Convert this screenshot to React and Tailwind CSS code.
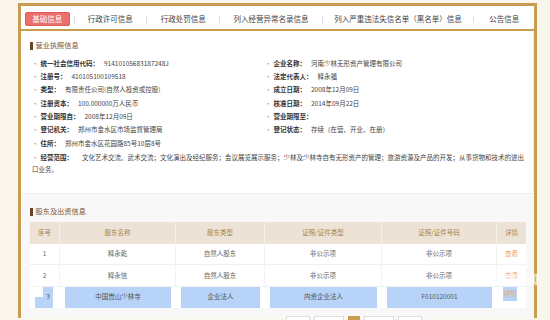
import React from 'react';

const tabs = [
  { label: '行政许可信息', w: 'w-[72px]' },
  { label: '行政处罚信息', w: 'w-[73px]' },
  { label: '列入经营异常名录信息', w: 'w-[102px]' },
  { label: '列入严重违法失信名单（黑名单）信息', w: 'w-[152px]' },
  { label: '公告信息', w: 'w-[60px]' },
];

const leftRows = [
  { label: '统一社会信用代码：', value: '91410105683187248J' },
  { label: '注册号：', value: '410105100109518' },
  { label: '类型：', value: '有限责任公司(自然人投资或控股)' },
  { label: '注册资本：', value: '100.000000万人民币' },
  { label: '营业期限自：', value: '2008年12月09日' },
  { label: '登记机关：', value: '郑州市金水区市场监督管理局' },
];

const rightRows = [
  { label: '企业名称：', value: '河南少林无形资产管理有限公司' },
  { label: '法定代表人：', value: '释永福' },
  { label: '成立日期：', value: '2008年12月09日' },
  { label: '核准日期：', value: '2014年09月22日' },
  { label: '营业期限至：', value: '' },
  { label: '登记状态：', value: '存续（在营、开业、在册）' },
];

const shareholders = [
  { no: '1', name: '释永乾', type: '自然人股东', certType: '非公示项', certNo: '非公示项' },
  { no: '2', name: '释永信', type: '自然人股东', certType: '非公示项', certNo: '非公示项' },
];

const cols = ['w-[30px]', 'w-[116px]', 'w-[89px]', 'w-[117px]', 'w-[115px]', 'w-[29px]'];

function Field({ label, value }) {
  return (
    <div className="flex h-[13.3px] items-center whitespace-nowrap leading-none">
      <span className="mr-[2px] text-[#999]">·</span>
      <span className="font-bold text-[#333]">{label}</span>
      <span className="ml-[5px] text-[#444]">{value}</span>
    </div>
  );
}

function SectionTitle({ children }) {
  return (
    <div className="flex h-[10px] items-center gap-[3px] text-[7.2px] leading-none text-[#7d5430]">
      <span className="h-[8px] w-[2.5px] bg-[#6b4423]" />
      {children}
    </div>
  );
}

export default function App() {
  return (
    <div className="relative h-[320px] w-[550px] overflow-hidden bg-[#faf6ee] pl-[18px] pt-[3px] font-['Noto_Sans_CJK_SC',sans-serif]">
      <div className="w-[519px] border-x-[3px] border-t-[3px] border-[#c99d51] bg-white">
        {/* tabs */}
        <div className="flex h-[25px] items-center border-b-2 border-[#c99d51] pl-[4px] pt-[3px] text-[7.5px] text-[#444]">
          <div className="flex h-[14px] w-[45px] items-center justify-center rounded-[2px] border border-[#e05a58] bg-[#ea6f6d] text-white">
            基础信息
          </div>
          <div className="ml-[4px] h-[7px] w-px bg-[#ddd]" />
          {tabs.map((t, i) => (
            <React.Fragment key={t.label}>
              <div className={`${t.w} text-center`}>{t.label}</div>
              {i < tabs.length - 1 && <div className="h-[7px] w-px bg-[#ddd]" />}
            </React.Fragment>
          ))}
        </div>

        {/* business licence */}
        <div className="h-[162px] border-r border-[#eee] px-[9px] pt-[10px] text-[6.5px]">
          <SectionTitle>营业执照信息</SectionTitle>
          <div className="mt-[5.5px] grid grid-cols-[233px_1fr] pl-[2px]">
            <div>
              {leftRows.map((r) => (
                <Field key={r.label} {...r} />
              ))}
            </div>
            <div>
              {rightRows.map((r) => (
                <Field key={r.label} {...r} />
              ))}
            </div>
          </div>
          <div className="pl-[2px]">
            <Field label="住所：" value="郑州市金水区花园路85号10层8号" />
            <p className="mt-[1px] leading-[12.5px] text-[#444]">
              <span className="mr-[2px] text-[#999]">·</span>
              <span className="font-bold text-[#333]">经营范围：</span>
              <span className="inline-block w-[9px]" />
              文化艺术交流、武术交流；文化演出及经纪服务；会议展览展示服务；少林及少林寺自有无形资产的管理；旅游资源及产品的开发；从事货物和技术的进出口业务。
            </p>
          </div>
        </div>

        {/* shareholders */}
        <div className="h-[125px] border-t border-[#eee] bg-[#f8f8f8] px-[9px] pt-[13px]">
          <SectionTitle>股东及出资信息</SectionTitle>
          <div className="mt-[5px] w-[496px] text-[6.5px]">
            <div className="flex h-[22px] bg-[#ece3d6] text-[#a8834a]">
              {['序号', '股东名称', '股东类型', '证照/证件类型', '证照/证件号码', '详情'].map((h, i) => (
                <div key={h} className={`${cols[i]} flex items-center justify-center border-r border-[#f5efe6] last:border-r-0`}>
                  {h}
                </div>
              ))}
            </div>
            {shareholders.map((s) => (
              <div key={s.no} className="flex h-[21.3px] border-b border-[#f0f0f0] bg-white text-[#666]">
                {[s.no, s.name, s.type, s.certType, s.certNo].map((v, i) => (
                  <div key={i} className={`${cols[i]} flex items-center justify-center border-r border-[#f3f3f3]`}>
                    {v}
                  </div>
                ))}
                <div className={`${cols[5]} flex items-center justify-center text-[#f0a25e]`}>查看</div>
              </div>
            ))}
            <div className="flex h-[21.3px] bg-white text-[#555]">
              <div className={`${cols[0]} relative`}>
                <div className="absolute left-[13px] top-0 h-[10px] w-[10px] bg-[#b7d3f7]" />
                <div className="absolute bottom-0 left-[5px] h-[11px] w-[18px] bg-[#b7d3f7]" />
                <div className="relative flex h-full items-center justify-center pl-[6px]">3</div>
              </div>
              <div className={`${cols[1]} px-[5px]`}>
                <div className="flex h-full items-center justify-center bg-[#b7d3f7]">中国嵩山少林寺</div>
              </div>
              <div className={`${cols[2]} px-[5px]`}>
                <div className="flex h-full items-center justify-center bg-[#b7d3f7]">企业法人</div>
              </div>
              <div className={`${cols[3]} px-[5px]`}>
                <div className="flex h-full items-center justify-center bg-[#b7d3f7]">内资企业法人</div>
              </div>
              <div className={`${cols[4]} px-[5px]`}>
                <div className="flex h-full items-center justify-center bg-[#b7d3f7]">F010120001</div>
              </div>
              <div className={`${cols[5]} pl-[6px] pr-[9px]`}>
                <div className="flex h-[14px] items-center justify-center bg-[#b7d3f7] text-[#f0a25e]">详情</div>
              </div>
            </div>
            {/* pagination */}
            <div className="ml-[256px] mt-[8px] flex gap-[4px]">
              <div className="h-[14px] w-[24px] border border-[#ddd] bg-white" />
              <div className="h-[14px] w-[30px] border border-[#ddd] bg-white" />
              <div className="h-[14px] w-[12px] bg-[#c99d51]" />
              <div className="h-[14px] w-[30px] border border-[#ddd] bg-white" />
              <div className="h-[14px] w-[24px] border border-[#ddd] bg-white" />
            </div>
          </div>
        </div>
      </div>

      {/* watermark */}
      <div className="pointer-events-none absolute left-[494px] top-[258px] flex flex-col items-center leading-none text-white/80">
        <span className="font-['Liberation_Serif',serif] text-[12px] italic">Lago</span>
        <span className="mt-[4px] text-[11px] font-bold">开屏新闻</span>
      </div>
    </div>
  );
}
